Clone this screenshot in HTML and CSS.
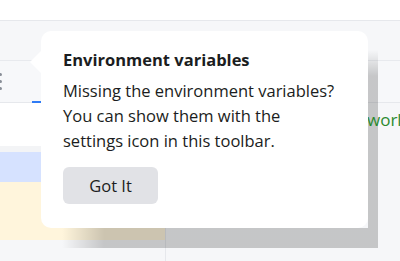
FILE: index.html
```
<!DOCTYPE html>
<html>
<head>
<meta charset="utf-8">
<link rel="stylesheet" href="styles.css">
</head>
<body>
<div class="app">
  <div class="topbar"></div>
  <div class="tabs"></div>
  <div class="toolbar">
    <span class="kebab"><i></i><i></i><i></i></span>
    <span class="active-tab"></span>
  </div>
  <div class="main">
    <div class="left">
      <div class="blank"></div>
      <div class="gap"></div>
      <div class="row-blue"></div>
      <div class="row-yellow"></div>
    </div>
    <div class="right">
      <div class="out"><span class="green">world</span></div>
    </div>
  </div>
</div>
<div class="shadow-right"></div>
<div class="shadow-bottom"></div>
<div class="tip">
  <div class="tip-title">Environment variables</div>
  <p class="tip-body">Missing the environment variables?<br>You can show them with the<br>settings icon in this toolbar.</p>
  <button class="tip-btn">Got It</button>
</div>
</body>
</html>
```
FILE: styles.css
```
html, body { margin: 0; padding: 0; }
body {
  width: 400px; height: 261px; overflow: hidden;
  background: #f6f7f9;
  font-family: "Open Sans", "Liberation Sans", sans-serif;
  position: relative;
}
.app { display: flex; flex-direction: column; height: 261px; }
.topbar { height: 20px; background: #ffffff; border-bottom: 1px solid #e6e8ec; }
.tabs { height: 39px; background: #f6f7f9; border-bottom: 1px solid #e8eaee; }
.toolbar {
  height: 41px; background: #f7f8fa; border-bottom: 1px solid #e6e8ec;
  position: relative; display: flex; align-items: center;
}
.kebab { display: flex; flex-direction: column; gap: 4px; margin-left: -1px; margin-top: 0; }
.kebab i { display: block; width: 3px; height: 3px; border-radius: 50%; background: #8a8f98; }
.active-tab { position: absolute; left: 32px; bottom: -1px; width: 10px; height: 2px; background: #2f7bf5; }
.main { display: flex; flex: 1; min-width: 0; }
.left { flex: none; width: 165px; border-right: 1px solid #e6e8ec; display: flex; flex-direction: column; }
.blank { height: 43px; background: #ffffff; }
.gap { height: 6px; background: #f3f4f6; }
.row-blue { height: 30px; background: #d6e2ff; }
.row-yellow { height: 58px; background: #fff5dc; }
.right { flex: 1; min-width: 0; }
.out { position: relative; z-index: 2; padding: 7px 0 0 201px; line-height: 20px; white-space: nowrap; }
.green { color: #2c8a2f; font-size: 17px; }
.shadow-right {
  position: absolute; z-index: 1; left: 368px; top: 50px; width: 10px; height: 198px;
  background: linear-gradient(to bottom, rgba(0,0,0,0) 0, rgba(0,0,0,0.2) 26px);
}
.shadow-bottom {
  position: absolute; z-index: 1; left: 62px; top: 228px; width: 306px; height: 20px;
  background: linear-gradient(to right, rgba(0,0,0,0) 0, rgba(0,0,0,0.2) 42px);
}
.tip {
  position: absolute; z-index: 3; left: 41px; top: 31px; width: 327px; height: 197px;
  box-sizing: border-box; padding: 19px 10px 20px 22px;
  background: #ffffff; border-radius: 10px; color: #1b1d21;
}
.tip::before {
  content: ""; position: absolute; left: -11px; top: 20px;
  border-top: 11px solid transparent; border-bottom: 11px solid transparent;
  border-right: 11px solid #ffffff;
}
.tip-title { font-weight: 700; font-size: 16.5px; line-height: 20px; }
.tip-body { margin: 8px 0 0; font-size: 16.5px; line-height: 25px; white-space: nowrap; }
.tip-btn {
  margin-top: 14px; width: 95px; height: 37px; border: 0; border-radius: 6px;
  background: #e1e2e6; color: #1b1d21; font-family: inherit; font-size: 16.5px; padding: 0;
}
```
